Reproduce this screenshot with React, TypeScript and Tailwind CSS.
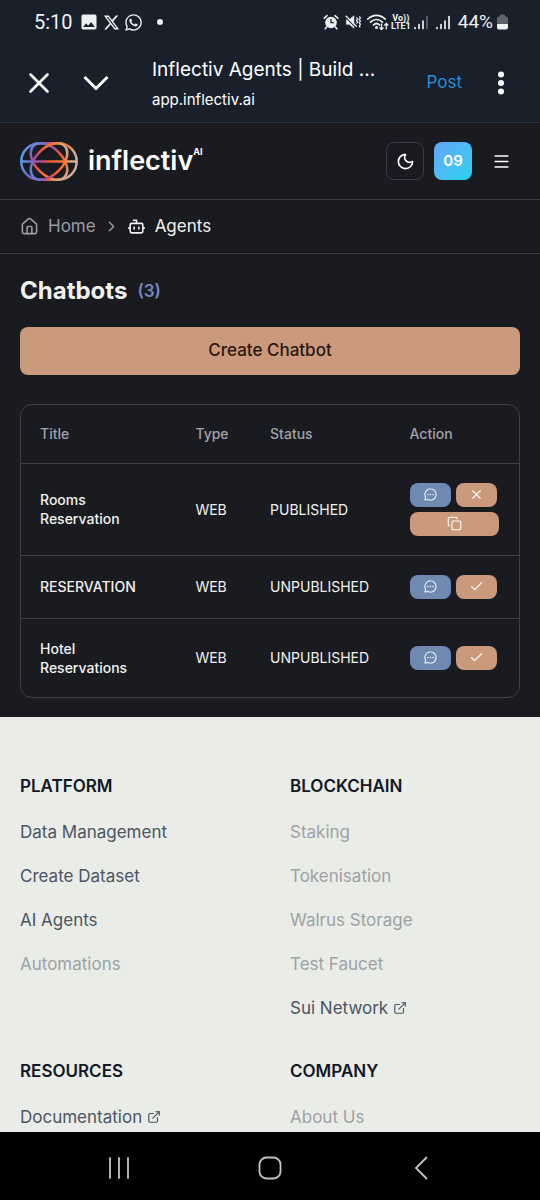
import { Bot, Check, ChevronRight, Copy, ExternalLink, House, Menu, Moon, X } from "lucide-react";
import { FaWhatsapp, FaXTwitter } from "react-icons/fa6";
import { MdImage } from "react-icons/md";
import { PiChatCircleDots } from "react-icons/pi";

type Chatbot = { title: string; type: string; published: boolean };
type FooterLink = { label: string; muted?: boolean; external?: boolean };

const chatbots: Chatbot[] = [
  { title: "Rooms Reservation", type: "WEB", published: true },
  { title: "RESERVATION", type: "WEB", published: false },
  { title: "Hotel Reservations", type: "WEB", published: false },
];

const footerSections: { heading: string; links: FooterLink[] }[] = [
  {
    heading: "PLATFORM",
    links: [
      { label: "Data Management" },
      { label: "Create Dataset" },
      { label: "AI Agents" },
      { label: "Automations", muted: true },
    ],
  },
  {
    heading: "BLOCKCHAIN",
    links: [
      { label: "Staking", muted: true },
      { label: "Tokenisation", muted: true },
      { label: "Walrus Storage", muted: true },
      { label: "Test Faucet", muted: true },
      { label: "Sui Network", external: true },
    ],
  },
  { heading: "RESOURCES", links: [{ label: "Documentation", external: true }] },
  { heading: "COMPANY", links: [{ label: "About Us", muted: true }] },
];

function AlarmIcon() {
  return (
    <svg viewBox="0 0 16 16" className="w-4 h-4" fill="none" aria-hidden="true">
      <circle cx="8" cy="8.5" r="5.8" fill="#eef1f3" />
      <path d="M1.2 4.2 4 1.6M14.8 4.2 12 1.6M3.6 13l-1.4 1.8M12.4 13l1.4 1.8" stroke="#eef1f3" strokeWidth="1.6" strokeLinecap="round" />
      <path d="M8 5v3.7h2.8" stroke="#17202b" strokeWidth="1.3" />
    </svg>
  );
}

function MuteIcon() {
  return (
    <svg viewBox="0 0 17 16" className="w-4 h-4" fill="none" stroke="#eef1f3" aria-hidden="true">
      <path d="M1.5 5.5h3l5-4.2v13.4l-5-4.2h-3z" fill="#eef1f3" strokeWidth=".6" />
      <path d="M0 2.5 12 14.5" stroke="#17202b" strokeWidth="1.2" />
      <path d="M.8 1.3 12.5 13" strokeWidth="1.3" />
      <path d="m12.2 3 1.3 1.7-1.3 1.7 1.3 1.7-1.3 1.7M15.2 2l1.2 1.7-1.2 1.7 1.2 1.7-1.2 1.7 1.2 1.7-1.2 1.7 1 1.5" strokeWidth="1.3" />
    </svg>
  );
}

function WifiIcon() {
  return (
    <svg viewBox="0 0 22 17" className="w-[22px] h-[17px]" fill="none" stroke="#eef1f3" aria-hidden="true">
      <path d="M.8 5.2c5-5.2 12.4-5.2 17.4 0M3.6 8.2c3.5-3.6 8.3-3.6 11.8 0M6.4 11c1.9-1.9 4.3-1.9 6.2 0" strokeWidth="1.7" strokeLinecap="round" />
      <circle cx="9.5" cy="13.5" r="1.5" fill="#eef1f3" stroke="none" />
      <path d="M14.5 9.5v6m-2-2 2 2 2-2M19.3 15.5v-6m-2 2 2-2 2 2" strokeWidth="1.3" />
    </svg>
  );
}

function SignalIcon({ weak }: { weak?: boolean }) {
  return (
    <svg viewBox="0 0 14 15" className="w-[14px] h-[15px]" stroke="#eef1f3" strokeWidth="1.7" strokeLinecap="round" aria-hidden="true">
      <path d="M1 13.5v-.8M5 13.5V9.5M9 13.5V6" />
      <path d="M13 13.5V1.5" opacity={weak ? 0.35 : 1} />
    </svg>
  );
}

function BatteryIcon() {
  return (
    <svg viewBox="0 0 11 16" className="w-[11px] h-4" aria-hidden="true">
      <path d="M3 2.5V1.5Q3 .5 4 .5h3q1 0 1 1v1h1Q11 2.5 11 4.5V10H0V4.5Q0 2.5 2 2.5z" fill="#5c646d" />
      <path d="M0 10h11v3.5q0 2-2 2H2q-2 0-2-2z" fill="#eef1f3" />
    </svg>
  );
}

function StatusBar() {
  return (
    <div className="flex items-center justify-between h-11 pl-[34px] pr-8 text-[#eef1f3]">
      <div className="flex items-center gap-1">
        <span className="mr-[2px] text-[20px] leading-6 font-[Roboto,sans-serif]">5:10</span>
        <MdImage className="w-5 h-5" />
        <FaXTwitter className="w-[17px] h-[17px]" />
        <FaWhatsapp className="w-[19px] h-[19px]" />
        <span className="w-[6px] h-[6px] ml-[10px] rounded-full bg-[#eef1f3]" />
      </div>
      <div className="flex items-center">
        <div className="flex items-center gap-[6px]">
          <AlarmIcon />
          <MuteIcon />
          <WifiIcon />
        </div>
        <span className="ml-[2px] mr-[3px] flex flex-col text-center text-[9px] leading-[8px] font-bold font-[Roboto,sans-serif]">
          <span>Vo))</span>
          <span>LTE1</span>
        </span>
        <div className="flex items-center gap-2">
          <SignalIcon weak />
          <SignalIcon />
          <span className="text-[19px] leading-6 font-[Roboto,sans-serif]">44%</span>
        </div>
        <span className="ml-1"><BatteryIcon /></span>
      </div>
    </div>
  );
}

function BrowserBar() {
  return (
    <div className="flex items-center h-[78px] pl-7 pr-8 text-white">
      <button type="button" aria-label="Close" className="shrink-0">
        <svg viewBox="0 0 22 22" className="w-[22px] h-[22px]" fill="none" stroke="currentColor" strokeWidth="2.6" strokeLinecap="round">
          <path d="m2.500 2.500 17 17m0-17-17 17" />
        </svg>
      </button>
      <button type="button" aria-label="Collapse" className="shrink-0 ml-8">
        <svg viewBox="0 0 28 18" className="w-7 h-[18px]" fill="none" stroke="currentColor" strokeWidth="3">
          <path d="m2.500 3 11.500 11.500L25.500 3" />
        </svg>
      </button>
      <div className="flex-1 min-w-0 ml-[42px] pt-[2px]">
        <p className="truncate text-[19px] leading-7">Inflectiv Agents | Build ...</p>
        <p className="mt-1 truncate text-[15px] leading-6">app.inflectiv.ai</p>
      </div>
      <button type="button" className="text-[17px] text-[#2f8bd0]">Post</button>
      <button type="button" aria-label="More" className="ml-8">
        <svg viewBox="0 0 14 24" className="w-[14px] h-6" fill="currentColor">
          <circle cx="7" cy="3.5" r="3" />
          <circle cx="7" cy="12" r="3" />
          <circle cx="7" cy="20.5" r="3" />
        </svg>
      </button>
    </div>
  );
}

function LogoMark() {
  return (
    <svg viewBox="0 0 58 39" className="w-[58px] h-[39px]" fill="none" aria-hidden="true">
      <defs>
        <linearGradient id="mark" gradientUnits="userSpaceOnUse" x1="2" y1="12" x2="56" y2="27">
          <stop offset="0" stopColor="#5b9be8" />
          <stop offset=".18" stopColor="#6b74cc" />
          <stop offset=".34" stopColor="#a8489c" />
          <stop offset=".5" stopColor="#f05a34" />
          <stop offset=".74" stopColor="#f77c35" />
          <stop offset=".88" stopColor="#d0a890" />
          <stop offset="1" stopColor="#c4b4a4" />
        </linearGradient>
      </defs>
      <g stroke="url(#mark)" strokeWidth="2.5">
        <rect x="1.300" y="1.300" width="55.400" height="36.400" rx="18.200" />
        <path d="M1 19.550h56" />
        <ellipse cx="29" cy="19.500" rx="22" ry="13.400" transform="rotate(45 29 19.500)" />
        <ellipse cx="29" cy="19.500" rx="22" ry="13.400" transform="rotate(-45 29 19.500)" />
      </g>
    </svg>
  );
}

function Header() {
  return (
    <header className="flex items-center justify-between px-5 h-[77px] border-b border-[#3a3b40]">
      <a href="#" className="flex items-center gap-[10px] text-white">
        <LogoMark />
        <span className="flex items-start">
          <span className="text-[27px] leading-9 font-semibold">inflectiv</span>
          <sup className="top-0 text-[9px] leading-[18px] font-bold">AI</sup>
        </span>
      </a>
      <div className="flex items-center gap-[10px]">
        <button type="button" aria-label="Toggle theme" className="flex items-center justify-center w-[38px] h-[38px] rounded-lg border border-[#3a3a46] text-white">
          <Moon className="w-[19px] h-[19px]" />
        </button>
        <button type="button" className="w-[38px] h-[38px] rounded-lg bg-linear-to-br from-[#60a5fa] to-[#22d3ee] text-[15px] font-semibold text-white">
          09
        </button>
        <button type="button" aria-label="Open menu" className="flex items-center justify-center w-[38px] h-[38px] text-white">
          <Menu className="w-[19px] h-[19px]" />
        </button>
      </div>
    </header>
  );
}

function Breadcrumb() {
  return (
    <nav aria-label="Breadcrumb" className="flex items-center px-5 h-[54px] border-b border-[#3a3b40] text-[17px] text-[#9c9ca3]">
      <a href="#" className="flex items-center gap-[9px]">
        <House className="w-[19px] h-[19px]" />
        Home
      </a>
      <ChevronRight className="w-[17px] h-[17px] mx-[7px]" />
      <a href="#" className="flex items-center gap-[9px] text-[#f1f2ef]">
        <Bot className="w-[19px] h-[19px]" />
        Agents
      </a>
    </nav>
  );
}

const actionBtn = "flex items-center justify-center h-6 rounded-lg text-white";

function ChatbotTable() {
  return (
    <div className="mt-[29px] rounded-xl border border-[#3f4045] overflow-hidden">
      <table className="w-full text-left text-[14px] leading-[19px] text-[#f1f2ef]">
        <thead>
          <tr className="h-[58px] text-[#a1a1a8]">
            <th className="w-[31%] pl-[19px] font-medium">Title</th>
            <th className="w-[15%] pl-5 font-medium">Type</th>
            <th className="w-[28%] pl-5 font-medium">Status</th>
            <th className="w-[26%] pl-5 font-medium">Action</th>
          </tr>
        </thead>
        <tbody>
          {chatbots.map((bot) => (
            <tr key={bot.title} className="border-t border-[#3f4045]">
              <td className="py-5 pl-[19px] pr-5 font-medium">{bot.title}</td>
              <td className="pl-5">{bot.type}</td>
              <td className="pl-5">{bot.published ? "PUBLISHED" : "UNPUBLISHED"}</td>
              <td className="py-[19px] pl-5 pr-5">
                <div className="flex flex-wrap gap-[5px]">
                  <button type="button" aria-label="Chat" className={`${actionBtn} w-[41px] bg-[#6f89b3]`}>
                    <PiChatCircleDots className="w-[15px] h-[15px]" />
                  </button>
                  <button type="button" aria-label={bot.published ? "Unpublish" : "Publish"} className={`${actionBtn} w-[41px] bg-[#cb997b]`}>
                    {bot.published ? <X className="w-[15px] h-[15px]" strokeWidth={1.75} /> : <Check className="w-[15px] h-[15px]" strokeWidth={1.75} />}
                  </button>
                  {bot.published && (
                    <button type="button" aria-label="Copy link" className={`${actionBtn} w-full bg-[#cb997b]`}>
                      <Copy className="w-[15px] h-[15px]" strokeWidth={1.75} />
                    </button>
                  )}
                </div>
              </td>
            </tr>
          ))}
        </tbody>
      </table>
    </div>
  );
}

function Footer() {
  return (
    <footer className="grid grid-cols-2 gap-x-10 gap-y-[39px] px-5 pt-[57px] bg-[#e9ece7] flex-1 content-start">
      {footerSections.map((section) => (
        <div key={section.heading}>
          <h3 className="text-[17px] leading-6 font-semibold text-[#111827]">{section.heading}</h3>
          <ul className="flex flex-col gap-5 mt-[22px]">
            {section.links.map((link) => (
              <li key={link.label} className="text-[17px] leading-6">
                <a href="#" className={`inline-flex items-center gap-[5px] ${link.muted ? "text-[#9da2a6]" : "text-[#4b5563]"}`}>
                  {link.label}
                  {link.external && <ExternalLink className="w-[14px] h-[14px]" />}
                </a>
              </li>
            ))}
          </ul>
        </div>
      ))}
    </footer>
  );
}

function SystemNav() {
  return (
    <div className="grid grid-cols-3 items-center justify-items-center shrink-0 h-[68px] px-11 pt-1 bg-black text-[#c4c4c4]">
      <button type="button" aria-label="Recent apps">
        <svg viewBox="0 0 22 24" className="w-[22px] h-6" stroke="currentColor" strokeWidth="1.8" strokeLinecap="round">
          <path d="M2 2v20M11 2v20M20 2v20" />
        </svg>
      </button>
      <button type="button" aria-label="Home screen">
        <svg viewBox="0 0 24 24" className="w-6 h-6" fill="none" stroke="currentColor" strokeWidth="1.8">
          <rect x="1.500" y="1.500" width="21" height="21" rx="7" />
        </svg>
      </button>
      <button type="button" aria-label="Back">
        <svg viewBox="0 0 14 24" className="w-[14px] h-6" fill="none" stroke="currentColor" strokeWidth="1.8" strokeLinecap="round">
          <path d="M12.500 1.500 2 12l10.500 10.500" />
        </svg>
      </button>
    </div>
  );
}

export default function App() {
  return (
    <div className="flex flex-col h-screen bg-[#1a1b20] font-[Inter,sans-serif]">
      <div className="shrink-0 bg-[#17202b] border-b border-[#2e323c]">
        <StatusBar />
        <BrowserBar />
      </div>
      <div className="flex flex-col flex-1 min-h-0 overflow-y-auto">
        <Header />
        <Breadcrumb />
        <main className="px-5 pt-5 pb-[19px]">
          <h1 className="flex items-center gap-[10px] text-[24px] leading-[34px] font-bold text-[#f1f2ef]">
            Chatbots
            <span className="text-[17px] font-semibold text-[#7487bb]">(3)</span>
          </h1>
          <button type="button" className="w-full h-12 mt-[19px] rounded-lg bg-[#cb997b] text-[17px] font-medium text-[#2a1712]">
            Create Chatbot
          </button>
          <ChatbotTable />
        </main>
        <Footer />
      </div>
      <SystemNav />
    </div>
  );
}
